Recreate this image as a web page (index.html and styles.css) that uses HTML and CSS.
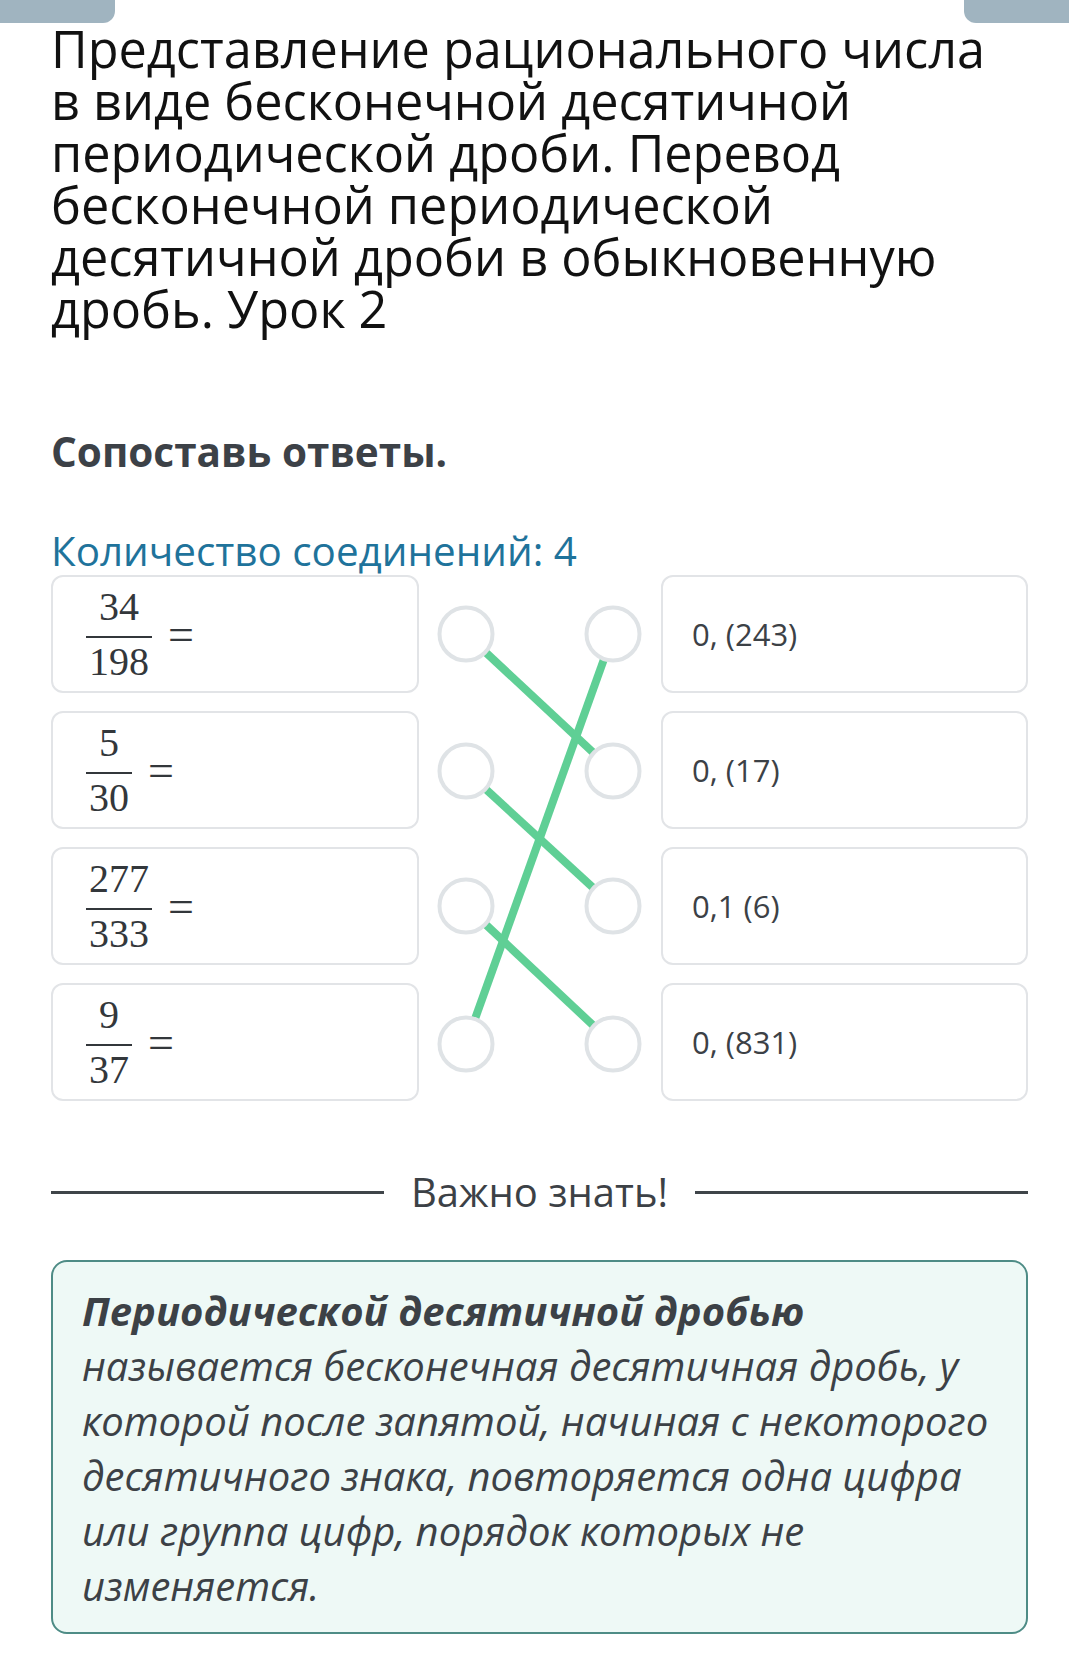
FILE: index.html
```html
<!DOCTYPE html>
<html lang="ru">
<head>
<meta charset="utf-8">
<title>Сопоставь ответы</title>
<link rel="stylesheet" href="styles.css">
</head>
<body>
<div class="tabs"><span class="tab tab-left"></span><span class="tab tab-right"></span></div>
<main class="page">
  <h1 class="title">Представление рационального числа в виде бесконечной десятичной периодической дроби. Перевод бесконечной периодической десятичной дроби в обыкновенную дробь. Урок 2</h1>
  <h2 class="task">Сопоставь ответы.</h2>
  <div class="count">Количество соединений: 4</div>

  <div class="match">
    <div class="card left r1"><span class="frac"><span class="num">34</span><span class="den">198</span></span><span class="eq">=</span></div>
    <div class="card left r2"><span class="frac"><span class="num">5</span><span class="den">30</span></span><span class="eq">=</span></div>
    <div class="card left r3"><span class="frac"><span class="num">277</span><span class="den">333</span></span><span class="eq">=</span></div>
    <div class="card left r4"><span class="frac"><span class="num">9</span><span class="den">37</span></span><span class="eq">=</span></div>

    <svg class="links" width="242" height="526" viewBox="0 0 242 526" xmlns="http://www.w3.org/2000/svg">
      <g stroke="#5fcf95" stroke-width="8" stroke-linecap="butt">
        <line x1="47" y1="59" x2="194" y2="196"/>
        <line x1="194" y1="59" x2="47" y2="469"/>
        <line x1="47" y1="196" x2="194" y2="331"/>
        <line x1="47" y1="331" x2="194" y2="469"/>
      </g>
      <g fill="#ffffff" stroke="#dfe3e6" stroke-width="4">
        <circle cx="47" cy="59" r="26.5"/>
        <circle cx="194" cy="59" r="26.5"/>
        <circle cx="47" cy="196" r="26.5"/>
        <circle cx="194" cy="196" r="26.5"/>
        <circle cx="47" cy="331" r="26.5"/>
        <circle cx="194" cy="331" r="26.5"/>
        <circle cx="47" cy="469" r="26.5"/>
        <circle cx="194" cy="469" r="26.5"/>
      </g>
    </svg>

    <div class="card right r1">0, (243)</div>
    <div class="card right r2">0, (17)</div>
    <div class="card right r3">0,1 (6)</div>
    <div class="card right r4">0, (831)</div>
  </div>

  <div class="divider"><span class="rule"></span><span class="divider-text">Важно знать!</span><span class="rule"></span></div>

  <div class="note"><strong>Периодической десятичной дробью</strong> называется бесконечная десятичная дробь, у которой после запятой, начиная с некоторого десятичного знака, повторяется одна цифра или группа цифр, порядок которых не изменяется.</div>
</main>
</body>
</html>
```

FILE: styles.css
```css
html, body {
  margin: 0;
  padding: 0;
  background: #ffffff;
}

body {
  font-family: "Open Sans", "Noto Sans", sans-serif;
  color: #3c4146;
}

.tabs {
  display: flex;
  justify-content: space-between;
  height: 23px;
}

.tab {
  display: block;
  height: 23px;
  background: #a0b4c0;
}

.tab-left {
  width: 115px;
  border-radius: 0 0 12px 0;
}

.tab-right {
  width: 105px;
  border-radius: 0 0 0 12px;
}

.page {
  padding: 0 41px 60px 51px;
}

.title {
  margin: 0 40px 0 0;
  font-size: 50.4px;
  line-height: 52px;
  font-weight: 400;
  color: #111111;
}

.task {
  margin: 88px 0 0;
  font-size: 40.5px;
  line-height: 57px;
  font-weight: 700;
  color: #3c4147;
}

.count {
  margin-top: 47px;
  font-size: 40.4px;
  line-height: 48px;
  color: #1f739b;
}

.match {
  display: grid;
  grid-template-columns: 368px 242px 1fr;
  grid-template-rows: repeat(4, 118px);
  row-gap: 18px;
}

.card {
  display: flex;
  align-items: center;
  box-sizing: border-box;
  border: 2px solid #e2e4e7;
  border-radius: 12px;
  background: #ffffff;
}

.left {
  grid-column: 1;
  padding-left: 33px;
}

.right {
  grid-column: 3;
  padding-left: 29px;
  font-size: 31px;
  color: #3c4146;
}

.r1 { grid-row: 1; }
.r2 { grid-row: 2; }
.r3 { grid-row: 3; }
.r4 { grid-row: 4; }

.links {
  grid-column: 2;
  grid-row: 1 / 5;
  display: block;
}

.frac {
  display: inline-flex;
  flex-direction: column;
  align-items: center;
  padding: 0 3px;
  font-family: "Liberation Serif", "DejaVu Serif", serif;
  font-size: 40px;
  line-height: 40px;
  color: #33373b;
}

.num {
  display: block;
  padding-bottom: 9px;
  border-bottom: 2px solid #33373b;
  margin: 0 -3px;
  padding-left: 3px;
  padding-right: 3px;
  align-self: stretch;
  text-align: center;
}

.den {
  display: block;
  padding-top: 4px;
}

.eq {
  margin-left: 16px;
  font-family: "Liberation Serif", "DejaVu Serif", serif;
  font-size: 46px;
  line-height: 40px;
  color: #33373b;
  position: relative;
  top: 1px;
}

.divider {
  display: flex;
  align-items: center;
  gap: 27px;
  margin-top: 64px;
}

.rule {
  flex: 1;
  height: 3px;
  background: #3f4549;
}

.divider-text {
  font-size: 40px;
  line-height: 54px;
  color: #3c4146;
}

.note {
  margin-top: 41px;
  box-sizing: border-box;
  border: 2px solid #4e8c86;
  border-radius: 16px;
  background: #eef9f6;
  padding: 21px 26px 19px 29px;
  font-size: 40px;
  line-height: 55px;
  font-style: italic;
  color: #3c4146;
}

.note strong {
  font-weight: 700;
}
```
